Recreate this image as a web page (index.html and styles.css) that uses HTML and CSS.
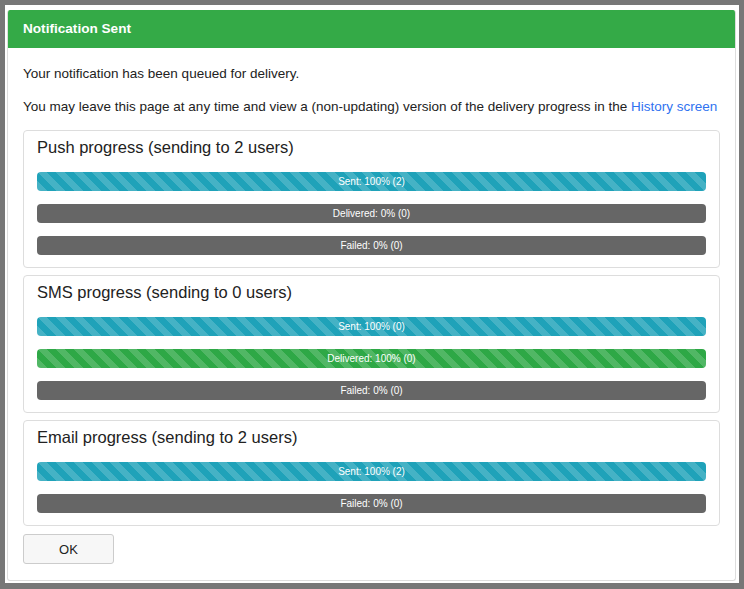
FILE: index.html
```html
<!DOCTYPE html>
<html>
<head>
<meta charset="utf-8">
<link rel="stylesheet" href="styles.css">
</head>
<body>
<div class="frame">
  <div class="panel">
    <div class="panel-head">Notification Sent</div>
    <div class="panel-body">
      <p class="line first">Your notification has been queued for delivery.</p>
      <p class="line nowrap">You may leave this page at any time and view a (non-updating) version of the delivery progress in the <a href="#" class="link">History screen</a></p>

      <div class="card">
        <div class="card-title">Push progress (sending to 2 users)</div>
        <div class="bars">
          <div class="bar bar-info">Sent: 100% (2)</div>
          <div class="bar">Delivered: 0% (0)</div>
          <div class="bar">Failed: 0% (0)</div>
        </div>
      </div>

      <div class="card">
        <div class="card-title">SMS progress (sending to 0 users)</div>
        <div class="bars">
          <div class="bar bar-info">Sent: 100% (0)</div>
          <div class="bar bar-success">Delivered: 100% (0)</div>
          <div class="bar">Failed: 0% (0)</div>
        </div>
      </div>

      <div class="card">
        <div class="card-title">Email progress (sending to 2 users)</div>
        <div class="bars">
          <div class="bar bar-info">Sent: 100% (2)</div>
          <div class="bar">Failed: 0% (0)</div>
        </div>
      </div>

      <button class="btn">OK</button>
    </div>
  </div>
</div>
</body>
</html>
```
FILE: styles.css
```css
html, body {
  margin: 0;
  padding: 0;
  background: #777777;
  height: 100%;
}
body {
  font-family: "Liberation Sans", Arial, sans-serif;
  color: #222;
  padding: 5px 5px 6px 5px;
  box-sizing: border-box;
}
.frame {
  background: #ffffff;
  height: 578px;
  padding: 5px 3px 2px 2px;
  box-sizing: border-box;
}
.panel {
  border: 1px solid #dddddd;
  border-top: none;
  border-radius: 3px;
  height: 571px;
  box-sizing: border-box;
  overflow: hidden;
}
.panel-head {
  background: #34aa47;
  color: #fff;
  font-weight: bold;
  font-size: 13.6px;
  height: 38px;
  line-height: 38px;
  padding-left: 15px;
}
.panel-body {
  padding: 17px 15px 0 15px;
}
.line {
  margin: 0 0 14px 0;
  font-size: 13.5px;
  line-height: 18px;
  color: #222;
}
.nowrap {
  white-space: nowrap;
}
.first {
  margin-bottom: 15px;
}
.link {
  color: #2f72f0;
  text-decoration: none;
}
.card {
  border: 1px solid #dddddd;
  border-radius: 4px;
  padding: 6px 13px 12px 13px;
  margin-top: 12px;
}
.card + .card {
  margin-top: 7px;
}
.card-title {
  font-size: 16.5px;
  line-height: 20px;
  color: #222;
  margin-bottom: 15px;
}
.bars {
  display: flex;
  flex-direction: column;
  gap: 13px;
}
.bar {
  height: 19px;
  line-height: 19px;
  border-radius: 4px;
  background-color: #666666;
  color: #fff;
  font-size: 10px;
  text-align: center;
}
.bar-info {
  background-color: #1fa2b9;
  background-image: linear-gradient(45deg, rgba(255,255,255,.17) 25%, transparent 25%, transparent 50%, rgba(255,255,255,.17) 50%, rgba(255,255,255,.17) 75%, transparent 75%, transparent);
  background-size: 18px 18px;
}
.bar-success {
  background-color: #2ea846;
  background-image: linear-gradient(45deg, rgba(255,255,255,.17) 25%, transparent 25%, transparent 50%, rgba(255,255,255,.17) 50%, rgba(255,255,255,.17) 75%, transparent 75%, transparent);
  background-size: 18px 18px;
}
.btn {
  margin-top: 8px;
  width: 91px;
  height: 30px;
  background: #f7f7f7;
  border: 1px solid #cccccc;
  border-radius: 3px;
  font-family: "Liberation Sans", Arial, sans-serif;
  font-size: 13px;
  color: #222;
  padding: 0;
}
```
